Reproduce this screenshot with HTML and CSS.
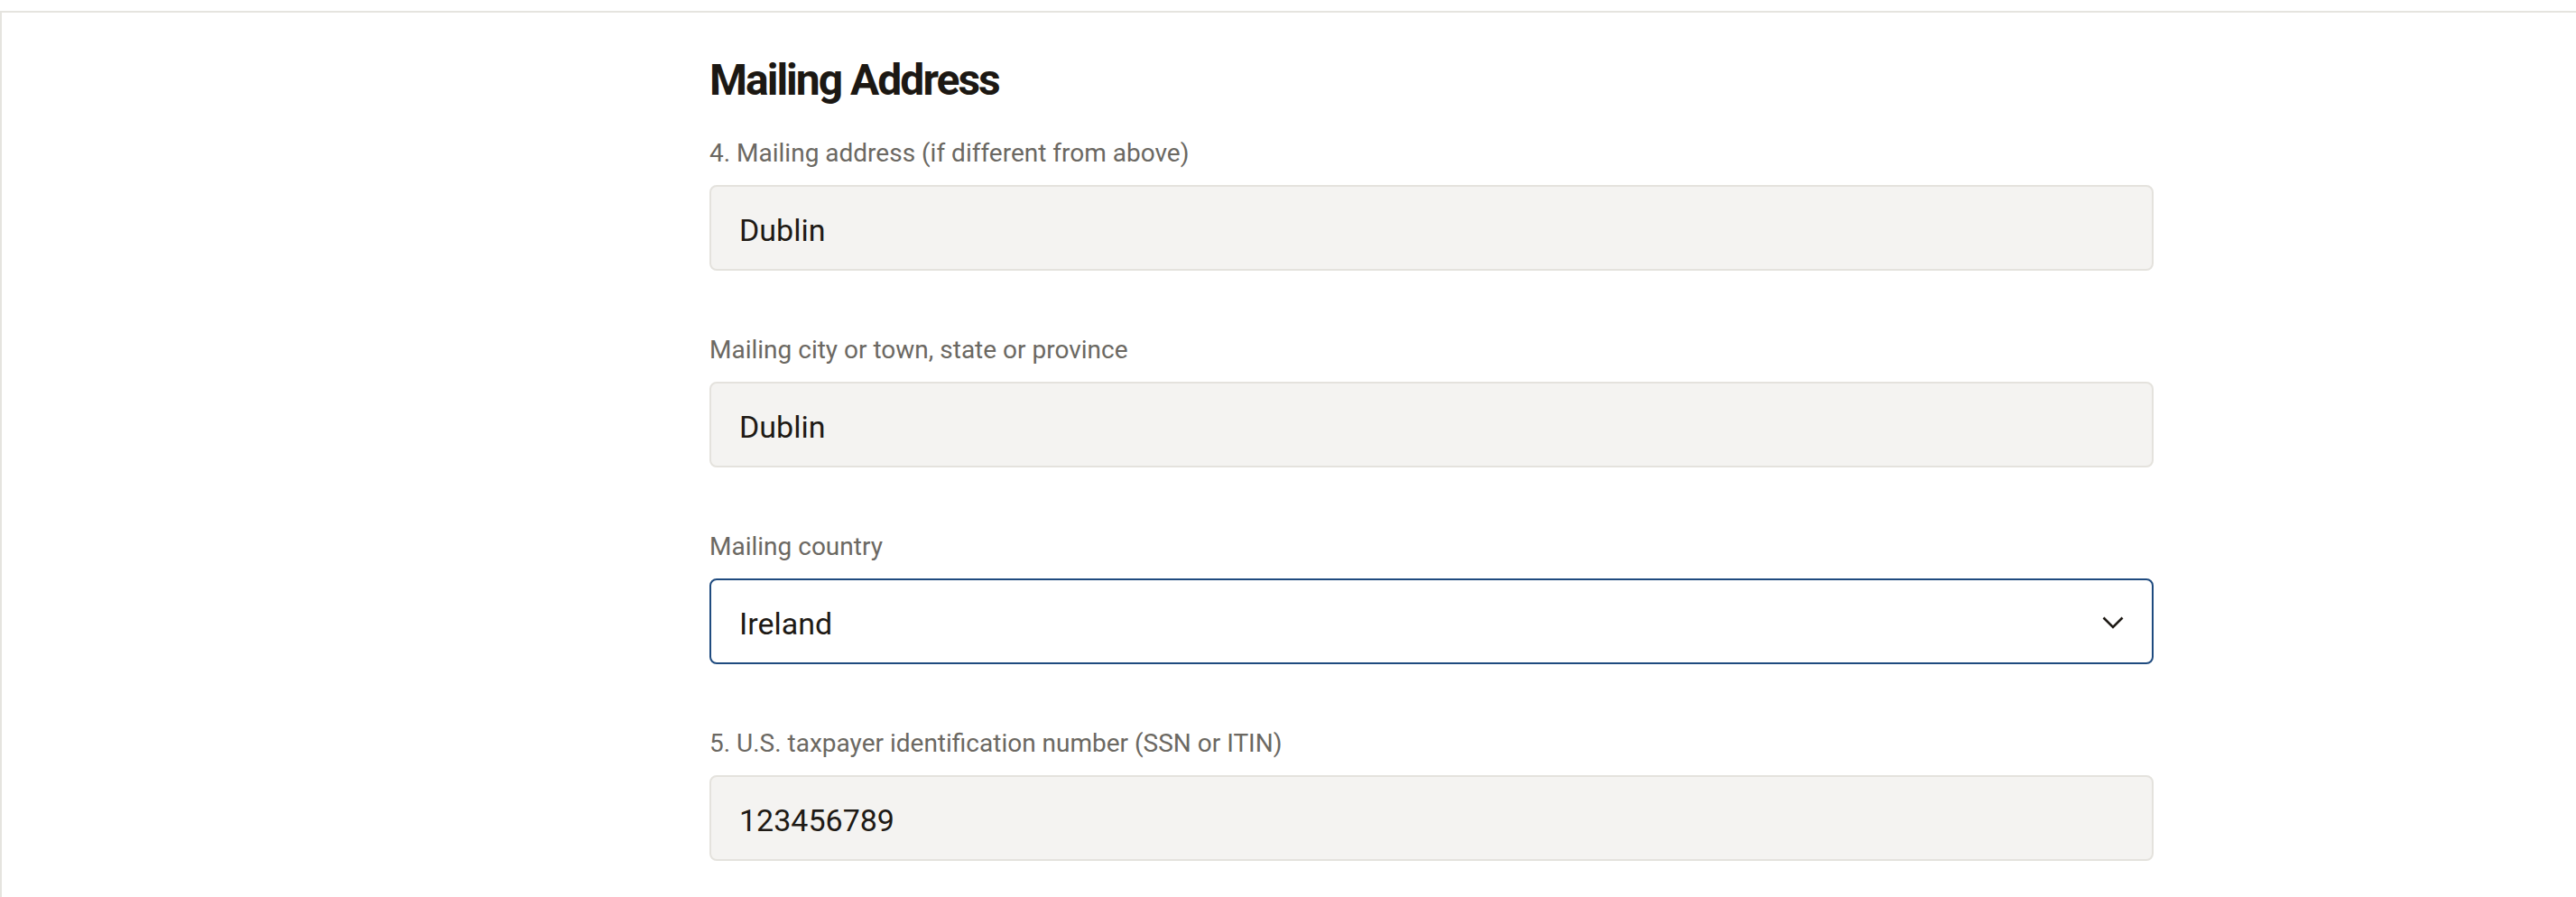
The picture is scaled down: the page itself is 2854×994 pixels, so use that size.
FILE: index.html
```html
<!DOCTYPE html>
<html lang="en">
<head>
<meta charset="utf-8">
<title>Mailing Address</title>
<link rel="stylesheet" href="styles.css">
</head>
<body>
<div class="card">
  <section class="form">
    <h2 class="title">Mailing Address</h2>

    <div class="field">
      <label class="label" for="addr">4. Mailing address (if different from above)</label>
      <input class="input" id="addr" type="text" value="Dublin">
    </div>

    <div class="field">
      <label class="label" for="city">Mailing city or town, state or province</label>
      <input class="input" id="city" type="text" value="Dublin">
    </div>

    <div class="field">
      <span class="label">Mailing country</span>
      <div class="select" role="combobox" aria-expanded="false">
        <span class="select-value">Ireland</span>
        <svg class="chevron" width="24" height="14" viewBox="0 0 24 14" aria-hidden="true">
          <path d="M1.5 1.5 L12 12 L22.5 1.5" fill="none" stroke="#1e1a15" stroke-width="2.6" stroke-linecap="butt" stroke-linejoin="miter"/>
        </svg>
      </div>
    </div>

    <div class="field">
      <label class="label" for="tin">5. U.S. taxpayer identification number (SSN or ITIN)</label>
      <input class="input" id="tin" type="text" value="123456789">
    </div>
  </section>
</div>
</body>
</html>
```

FILE: styles.css
```css
html, body {
  margin: 0;
  padding: 0;
  background: #ffffff;
  overflow: hidden;
  height: 100%;
}

body {
  font-family: Roboto, "Liberation Sans", Arial, sans-serif;
  color: #1e1a15;
}

.card {
  margin-top: 12px;
  border-top: 2px solid #e5e4df;
  border-left: 2px solid #e5e4df;
  min-height: 1200px;
  padding: 47px 0 0 784px;
  box-sizing: border-box;
}

.form {
  width: 1600px;
  display: flex;
  flex-direction: column;
}

.title {
  margin: 0 0 33px 0;
  font-size: 48px;
  line-height: 56px;
  font-weight: 700;
  letter-spacing: -2px;
  color: #1c1813;
}

.field {
  display: flex;
  flex-direction: column;
  gap: 15px;
  margin-bottom: 68px;
}

.label {
  font-size: 28px;
  line-height: 40px;
  color: #6b6862;
  font-weight: 400;
}

.input,
.select {
  box-sizing: border-box;
  width: 1600px;
  height: 95px;
  border-radius: 8px;
  font-family: Roboto, "Liberation Sans", Arial, sans-serif;
  font-size: 34px;
  line-height: 40px;
  color: #1e1a15;
}

.input {
  display: block;
  margin: 0;
  border: 2px solid #e4e2dd;
  background: #f4f3f1;
  padding: 28px 31px 23px 31px;
  outline: none;
}

.select {
  display: flex;
  align-items: center;
  justify-content: space-between;
  border: 2px solid #1f4b7f;
  background: #ffffff;
  padding: 5px 31px 0 31px;
}

.select-value {
  line-height: 40px;
}

.chevron {
  display: block;
  margin-top: -2px;
}
```
